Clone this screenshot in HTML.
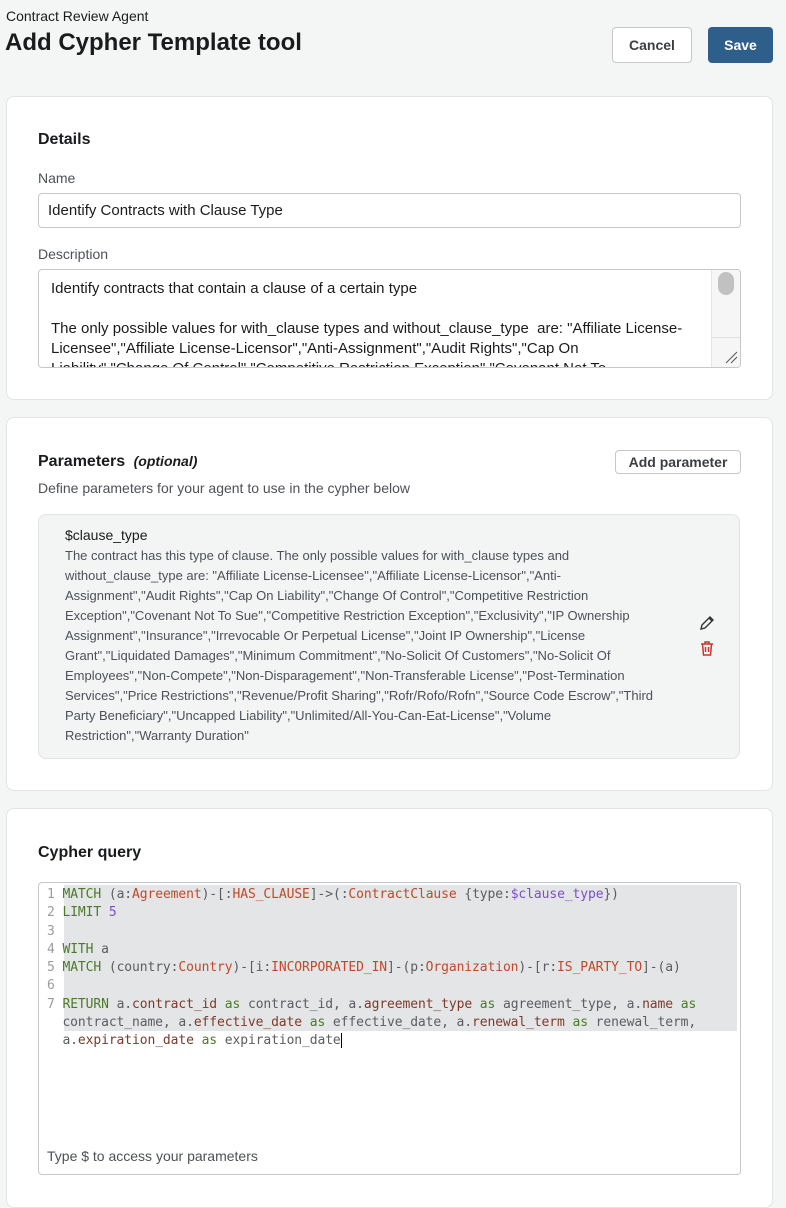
<!DOCTYPE html>
<html><head><meta charset="utf-8"><style>
*{box-sizing:border-box;margin:0;padding:0}
body{width:786px;height:1194px;overflow:hidden;background:#f4f5f5;font-family:"Liberation Sans",sans-serif;color:#1a1b1d;position:relative}
.abs{position:absolute}
.card{position:absolute;left:6px;width:767px;background:#fff;border:1px solid #e2e3e4;border-radius:8px}
.h{font-weight:bold;font-size:16px}
.lbl{font-size:14px;color:#4d5157}
.btn{position:absolute;border-radius:4px;font-size:14px;font-weight:bold;display:flex;align-items:center;justify-content:center}
.pl{font-size:13px;color:#4d5157;line-height:20px;white-space:nowrap}
.code{font-family:"DejaVu Sans Mono","Liberation Mono",monospace;font-size:13px;line-height:18.3px;white-space:pre;color:#5a5d61;letter-spacing:-0.1px}
.k{color:#4a7a2a}.o{color:#c0492b}.p{color:#7b3b2b}.v{color:#7a50c8}
.ln{color:#9a9ca0}
</style></head><body>
<div class="abs" style="left:6px;top:8px;font-size:14px">Contract Review Agent</div>
<div class="abs" style="left:5px;top:29px;font-size:24px;font-weight:bold">Add Cypher Template tool</div>
<div class="btn" style="left:612px;top:27px;width:80px;height:36px;border:1px solid #c5c7ca;background:#fff;color:#3b3e42">Cancel</div>
<div class="btn" style="left:708px;top:27px;width:65px;height:36px;background:#2e5f8a;color:#fff">Save</div>

<div class="card" style="top:96px;height:304px">
  <div class="abs h" style="left:31px;top:34px">Details</div>
  <div class="abs lbl" style="left:31px;top:73px">Name</div>
  <div class="abs" style="left:31px;top:96px;width:703px;height:35px;border:1px solid #c5c7ca;border-radius:4px;font-size:15px;padding:8px 9px">Identify Contracts with Clause Type</div>
  <div class="abs lbl" style="left:31px;top:149px">Description</div>
  <div class="abs" style="left:31px;top:172px;width:703px;height:99px;border:1px solid #c5c7ca;border-radius:4px;overflow:hidden">
    <div style="padding:9px 40px 0 12px;font-size:15px;line-height:20px;color:#1a1b1d">Identify contracts that contain a clause of a certain type<br><br>The only possible values for with_clause types and without_clause_type&nbsp; are: "Affiliate License-Licensee","Affiliate License-Licensor","Anti-Assignment","Audit Rights","Cap On Liability","Change Of Control","Competitive Restriction Exception","Covenant Not To</div>
    <div class="abs" style="right:0;top:0;width:29px;height:97px;background:#f6f6f6;border-left:1px solid #e5e5e5"></div>
    <div class="abs" style="right:6px;top:2px;width:16px;height:23px;background:#c1c1c1;border-radius:8px"></div>
    <div class="abs" style="right:0;top:67px;width:29px;height:1px;background:#e0e0e0"></div>
    <svg class="abs" style="right:2px;top:80px" width="14" height="14"><path d="M2 13L13 2M7 13L13 7" stroke="#555" stroke-width="1"/></svg>
  </div>
</div>

<div class="card" style="top:417px;height:374px">
  <div class="abs h" style="left:31px;top:35px">Parameters <i style="font-size:14px;margin-left:4px">(optional)</i></div>
  <div class="abs lbl" style="left:31px;top:62px">Define parameters for your agent to use in the cypher below</div>
  <div class="btn" style="left:608px;top:32px;width:126px;height:24px;border:1px solid #c5c7ca;color:#3b3e42">Add parameter</div>
  <div class="abs" style="left:31px;top:96px;width:702px;height:245px;background:#f3f4f4;border:1px solid #e2e3e4;border-radius:8px">
    <div class="abs" style="left:26px;top:12px;font-size:14px">$clause_type</div>
    <div class="abs pl" style="left:26px;top:31px">The contract has this type of clause. The only possible values for with_clause types and<br>without_clause_type are: "Affiliate License-Licensee","Affiliate License-Licensor","Anti-<br>Assignment","Audit Rights","Cap On Liability","Change Of Control","Competitive Restriction<br>Exception","Covenant Not To Sue","Competitive Restriction Exception","Exclusivity","IP Ownership<br>Assignment","Insurance","Irrevocable Or Perpetual License","Joint IP Ownership","License<br>Grant","Liquidated Damages","Minimum Commitment","No-Solicit Of Customers","No-Solicit Of<br>Employees","Non-Compete","Non-Disparagement","Non-Transferable License","Post-Termination<br>Services","Price Restrictions","Revenue/Profit Sharing","Rofr/Rofo/Rofn","Source Code Escrow","Third<br>Party Beneficiary","Uncapped Liability","Unlimited/All-You-Can-Eat-License","Volume<br>Restriction","Warranty Duration"</div>
    <svg class="abs" style="left:660px;top:100px" width="16" height="16" viewBox="0 0 16 16"><path d="M2 14l1-4 8-8 3 3-8 8z M10 3l3 3" fill="none" stroke="#333" stroke-width="1.4"/></svg>
    <svg class="abs" style="left:661px;top:126px" width="14" height="15" viewBox="0 0 14 15"><path d="M1 3h12M5 3V1h4v2M2.5 3l1 11h7l1-11M5.5 6v5M8.5 6v5" fill="none" stroke="#c4372a" stroke-width="1.5"/></svg>
  </div>
</div>

<div class="card" style="top:808px;height:400px">
  <div class="abs h" style="left:31px;top:35px">Cypher query</div>
  <div class="abs" style="left:31px;top:73px;width:703px;height:293px;border:1px solid #c5c7ca;border-radius:4px;overflow:hidden">
    <div class="abs" style="left:25px;top:2px;width:673px;height:146px;background:#e4e5e6"></div>
    <div class="abs code" style="left:8px;top:3px"><span class="ln">1</span> <span class="k">MATCH</span> (a:<span class="o">Agreement</span>)-[:<span class="o">HAS_CLAUSE</span>]-&gt;(:<span class="o">ContractClause</span> {type:<span class="v">$clause_type</span>})
<span class="ln">2</span> <span class="k">LIMIT</span> <span class="v">5</span>
<span class="ln">3</span>
<span class="ln">4</span> <span class="k">WITH</span> a
<span class="ln">5</span> <span class="k">MATCH</span> (country:<span class="o">Country</span>)-[i:<span class="o">INCORPORATED_IN</span>]-(p:<span class="o">Organization</span>)-[r:<span class="o">IS_PARTY_TO</span>]-(a)
<span class="ln">6</span>
<span class="ln">7</span> <span class="k">RETURN</span> a.<span class="p">contract_id</span> <span class="k">as</span> contract_id, a.<span class="p">agreement_type</span> <span class="k">as</span> agreement_type, a.<span class="p">name</span> <span class="k">as</span>
  contract_name, a.<span class="p">effective_date</span> <span class="k">as</span> effective_date, a.<span class="p">renewal_term</span> <span class="k">as</span> renewal_term,
  a.<span class="p">expiration_date</span> <span class="k">as</span> expiration_date<span style="border-left:1px solid #000"></span></div>
    <div class="abs lbl" style="left:8px;top:265px">Type $ to access your parameters</div>
  </div>
</div>
</body></html>
